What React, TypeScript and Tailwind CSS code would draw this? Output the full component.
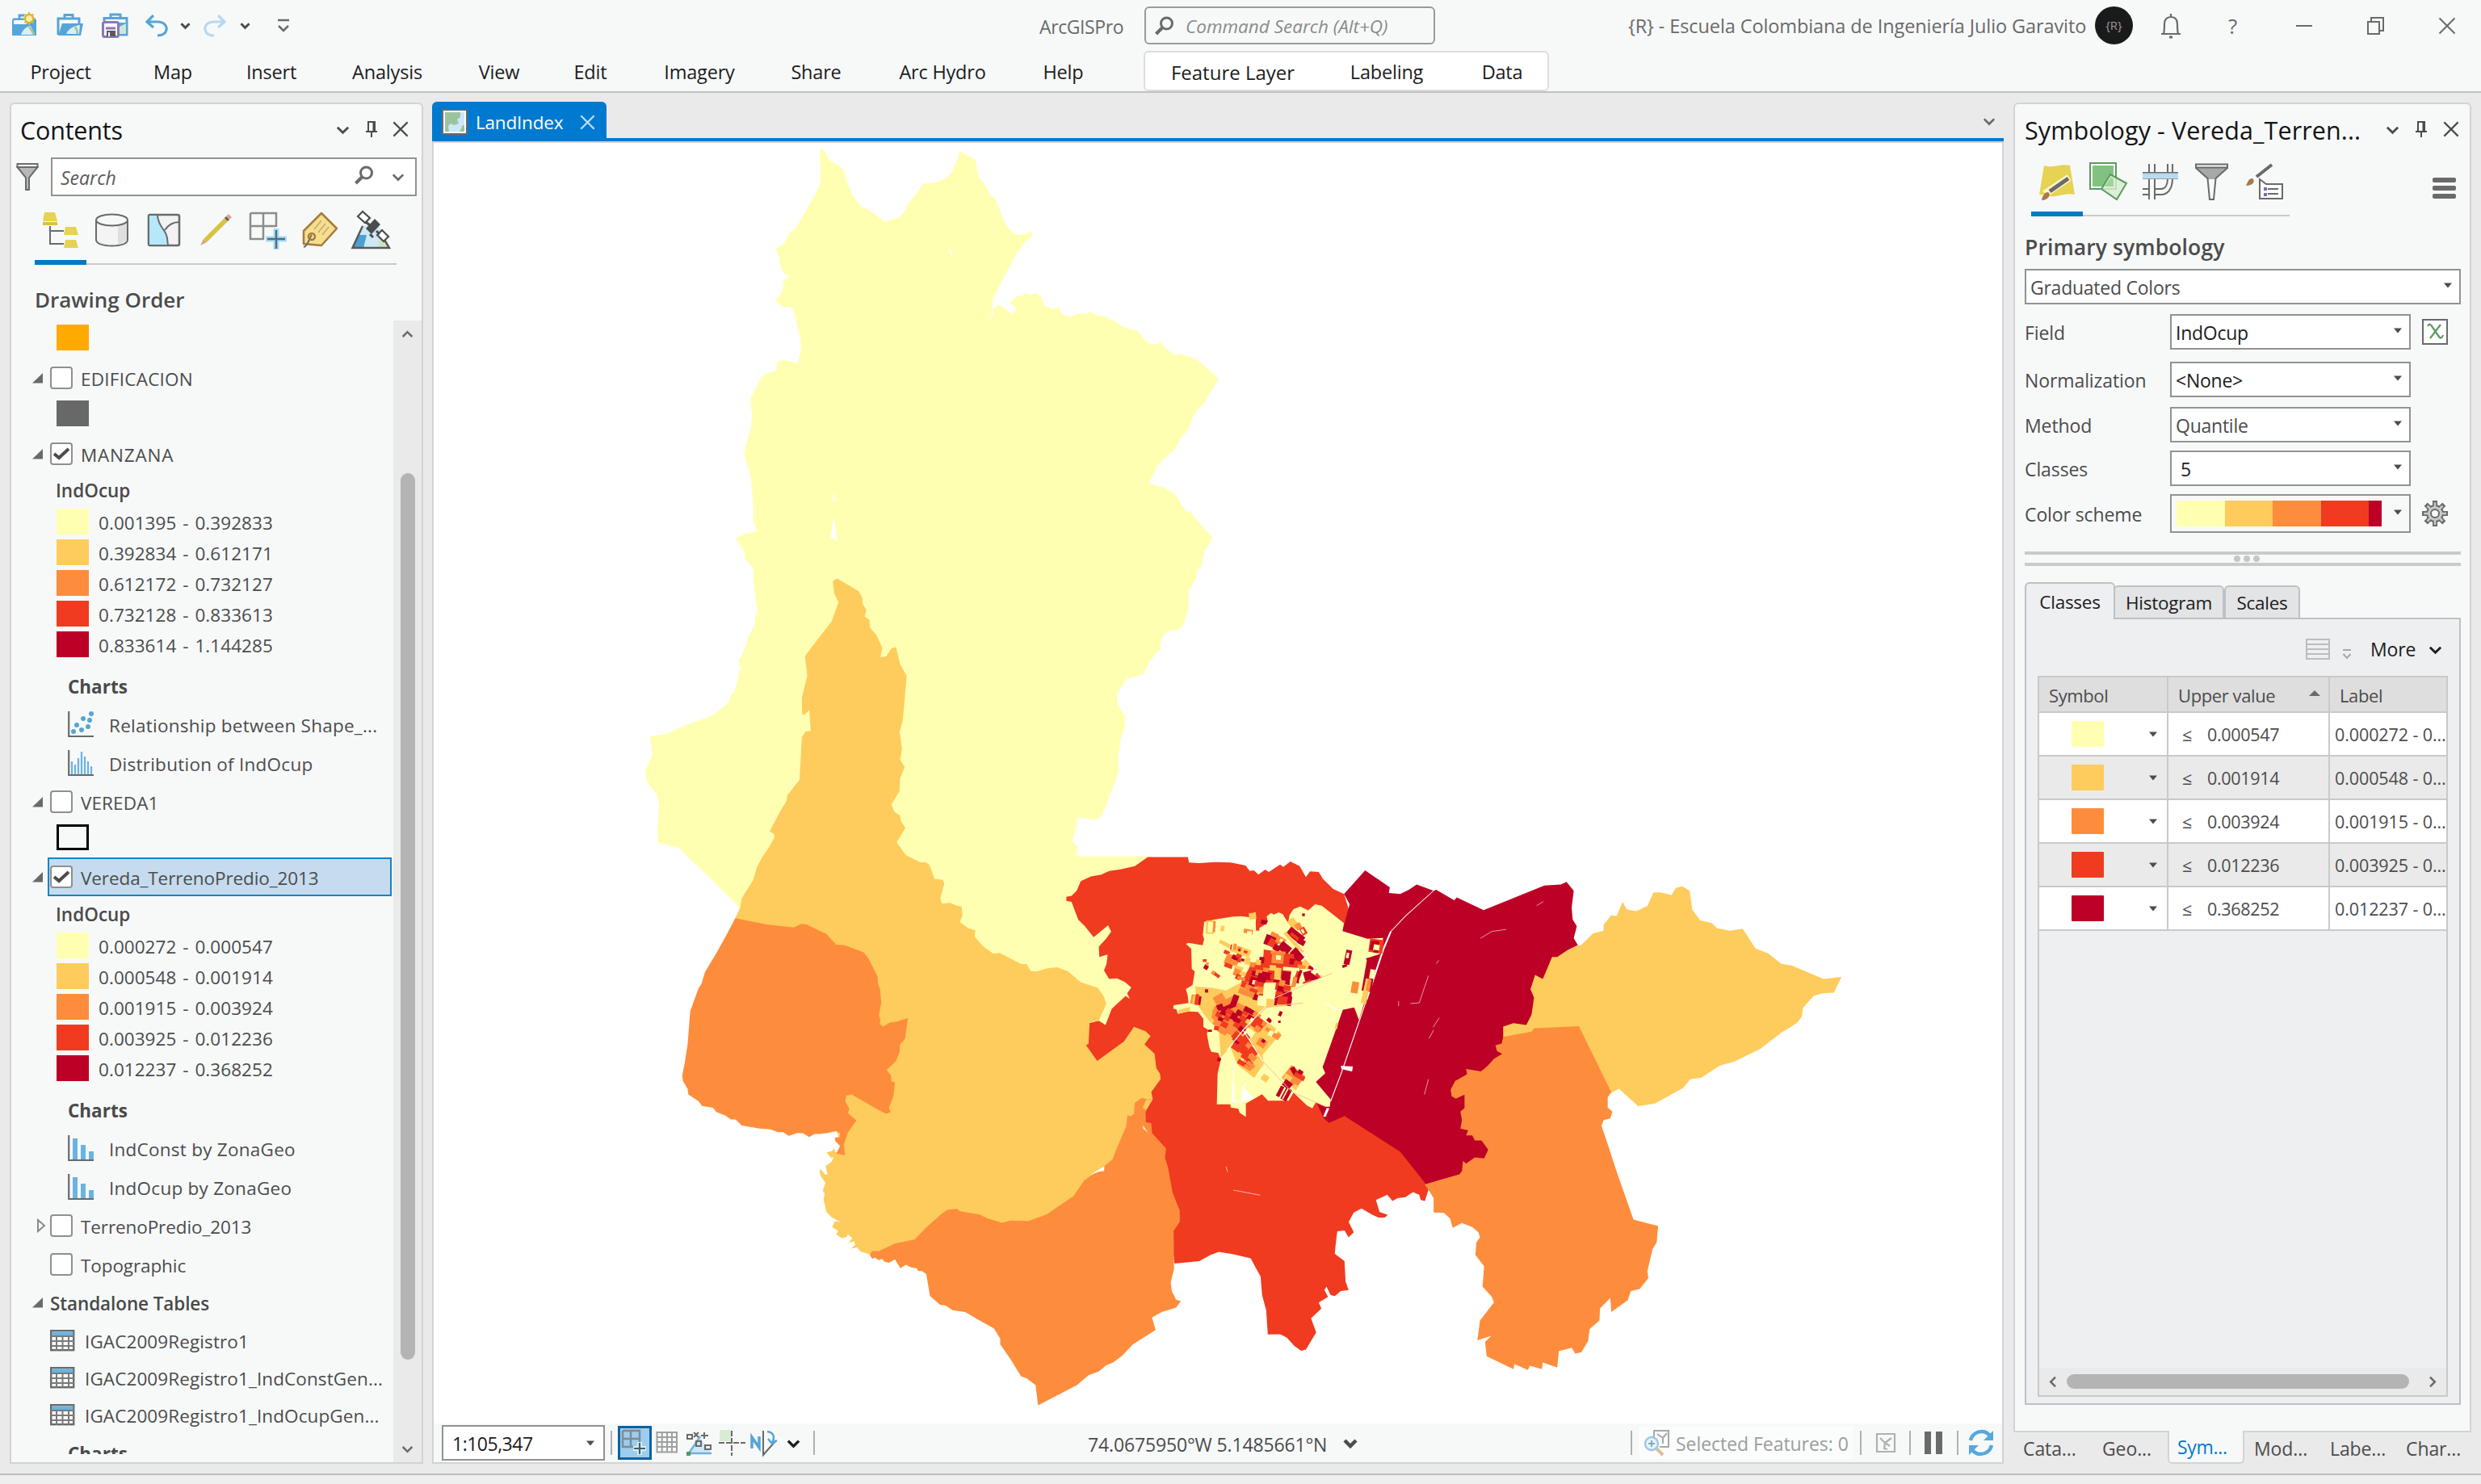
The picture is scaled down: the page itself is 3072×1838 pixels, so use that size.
import React from "react";

type P = { children?: React.ReactNode; className?: string };

const YELLOW = "#ffffb2";
const SAND = "#fecc5c";
const ORANGE = "#fd8d3c";
const RED = "#f03b20";
const DARK = "#bd0026";

/* ---------- small glyphs ---------- */

function Chevron({ className = "", dir = "down", size = 18, color = "#4c4c4c", w = 3 }: { className?: string; dir?: string; size?: number; color?: string; w?: number }) {
  const d = dir === "down" ? "M2 6 L9 13 L16 6" : dir === "up" ? "M2 12 L9 5 L16 12" : dir === "left" ? "M12 2 L5 9 L12 16" : "M6 2 L13 9 L6 16";
  return (
    <svg className={"shrink-0 " + className} width={size} height={size} viewBox="0 0 18 18" fill="none" stroke={color} strokeWidth={w}>
      <path d={d} />
    </svg>
  );
}

function Caret({ className = "" }: P) {
  return (
    <svg className={"shrink-0 " + className} width="10" height="7" viewBox="0 0 10 7">
      <path d="M0 0.5 H10 L5 6.5 Z" fill="#4c4c4c" />
    </svg>
  );
}

function Cross({ className = "", size = 22, color = "#4c4c4c", w = 2.4 }: { className?: string; size?: number; color?: string; w?: number }) {
  return (
    <svg className={"shrink-0 " + className} width={size} height={size} viewBox="0 0 22 22" fill="none" stroke={color} strokeWidth={w}>
      <path d="M1.5 1.5 L20.5 20.5 M20.5 1.5 L1.5 20.5" />
    </svg>
  );
}

function Pin({ className = "" }: P) {
  return (
    <svg className={"shrink-0 " + className} width="16" height="20" viewBox="0 0 16 20" fill="none" stroke="#4c4c4c" strokeWidth="2">
      <path d="M4 13 V1 H12 V13 M10.5 1 V13 M1 13 H15 M8 13 V20" />
    </svg>
  );
}

function Magnifier({ className = "" }: P) {
  return (
    <svg className={"shrink-0 " + className} width="24" height="24" viewBox="0 0 24 24" fill="none" stroke="#6a6a6a">
      <circle cx="14.500" cy="9" r="7" strokeWidth="3" />
      <path d="M9.500 14 L1.500 22" strokeWidth="4" />
    </svg>
  );
}

function Separator({ className = "" }: P) {
  return <div className={"h-[30px] w-[2px] shrink-0 bg-[#b0b0b0] " + className} />;
}

function Triangle() {
  return (
    <svg className="ml-[26px] shrink-0" width="14" height="13" viewBox="0 0 14 13">
      <path d="M0 12.500 L13 0 V12.500 Z" fill="#6a6a6a" />
    </svg>
  );
}

function Check({ on, className = "" }: { on?: boolean; className?: string }) {
  return (
    <div className={"flex size-7 shrink-0 items-center justify-center rounded-[4px] border-2 border-[#8f8f8f] bg-white " + className}>
      {on && (
        <svg width="20" height="16" viewBox="0 0 20 16" fill="none" stroke="#4c4c4c" strokeWidth="4">
          <path d="M1 8 L7 13 L19 2" />
        </svg>
      )}
    </div>
  );
}

/* ---------- title bar ---------- */

function Bag({ kind, className }: { kind: "new" | "open" | "save"; className: string }) {
  return (
    <svg className={"shrink-0 " + className} width="34" height="34" viewBox="0 0 34 34" fill="none">
      {kind === "new" && (
        <>
          <path d="M2 9 H18 M10 9 V4 H16" stroke="#56a5d9" strokeWidth="3" />
          <path d="M1 9 H31 V29 H1 Z" fill="#56a5d9" />
          <path d="M3 10 H22 V12 L18 15 H3 Z" fill="#f7f9f9" />
          <path d="M12 28 C14 22 18 18 24 17 L29 28 Z" fill="#dbeef5" />
          <path d="M22 18 C25 21 26 24 28 28" stroke="#9ecb9b" strokeWidth="3" />
          <circle cx="22" cy="8" r="5" fill="#fdf0a8" stroke="#d9b83a" strokeWidth="2.500" />
          <path d="M22 0 V3 M22 13 V16 M14 8 H17 M27 8 H30 M16.500 2.500 L18.500 4.500 M25.500 11.500 L27.500 13.500 M16.500 13.500 L18.500 11.500 M25.500 4.500 L27.500 2.500" stroke="#d9b83a" strokeWidth="2" />
        </>
      )}
      {kind === "open" && (
        <>
          <path d="M2 28 V8 H28 V14 M10 8 V3.500 H20 V8" stroke="#56a5d9" strokeWidth="3" />
          <path d="M7 14 H33 L30 29 H2 Z" fill="#56a5d9" />
          <path d="M12 27 C14 22 20 17 29 16 L28 27 Z" fill="#dbeef5" />
          <path d="M23 18 C25 21 26 24 26 27" stroke="#9ecb9b" strokeWidth="3" />
        </>
      )}
      {kind === "save" && (
        <>
          <path d="M3 11 V7.500 H31 V28 H22 M11 7 V3 H23 V7" stroke="#56a5d9" strokeWidth="3" />
          <path d="M22 13 H32 V29 H22 Z" fill="#56a5d9" />
          <path d="M22 27 V18 L30 14 V27 Z" fill="#cfe6d6" />
          <rect x="1.500" y="12.500" width="19" height="18" rx="2" fill="#f7f9f9" stroke="#8a78b8" strokeWidth="3" />
          <path d="M5 20 H17" stroke="#8a78b8" strokeWidth="3" />
          <path d="M6 23 H17 V30 H6 Z" fill="#5b5b5b" />
          <path d="M9 25 V30" stroke="#fff" strokeWidth="2" />
        </>
      )}
    </svg>
  );
}

function Undo({ flip, className }: { flip?: boolean; className: string }) {
  return (
    <svg className={"shrink-0 " + className} width="28" height="28" viewBox="0 0 28 28" fill="none" stroke={flip ? "#b7d8ee" : "#56a5d9"} strokeWidth="3.200">
      <path d={flip ? "M18 1 L26 9 L18 16 M25 9 H13 C4 9 1 15 2 19 C3 24 7 26 13 26" : "M10 1 L2 9 L10 16 M3 9 H15 C24 9 27 15 26 19 C25 24 21 26 15 26"} />
    </svg>
  );
}

function TitleBar() {
  return (
    <div className="flex h-[63px] items-center">
      <Bag kind="new" className="ml-[14px]" />
      <Bag kind="open" className="ml-[22px]" />
      <Bag kind="save" className="ml-[22px]" />
      <Undo className="ml-[20px]" />
      <Chevron size={13} className="ml-[15px]" w={4} />
      <Undo flip className="ml-[16px]" />
      <Chevron size={13} className="ml-[17px]" w={4} />
      <svg className="ml-[32px] shrink-0" width="18" height="18" viewBox="0 0 18 18" fill="none" stroke="#6a6a6a" strokeWidth="2.500">
        <path d="M2 2 H16 M3 9 L9 15 L15 9" />
      </svg>
      <span className="ml-[927px] w-[130px] pt-[3px] text-[23px] tracking-[-0.4px] text-[#6a6a6a]">ArcGISPro</span>
      <div className="flex h-[47px] w-[360px] shrink-0 items-center rounded-[6px] border-2 border-[#9a9a9a]">
        <Magnifier className="ml-[11px]" />
        <span className="ml-[14px] pt-[2px] text-[22.5px] tracking-[0px] text-[#8a8a8a] italic">Command Search (Alt+Q)</span>
      </div>
      <span className="ml-[239px] w-[578px] whitespace-nowrap pt-[2px] text-[23.5px] tracking-[-0.1px] text-[#6a6a6a]">{"{R} - Escuela Colombiana de Ingeniería Julio Garavito"}</span>
      <div className="flex size-[47px] shrink-0 items-center justify-center rounded-full bg-[#1a1a1a] text-[15px] text-[#9a9a9a]">{"{R}"}</div>
      <svg className="ml-[33px] shrink-0" width="28" height="32" viewBox="0 0 28 32" fill="none" stroke="#6a6a6a" strokeWidth="2.200">
        <path d="M2 26 H26 M5 26 C6 22 6 18 6 14 C6 8 9 5 14 5 C19 5 22 8 22 14 C22 18 22 22 23 26 M14 5 V1" />
        <path d="M12 30 H16" strokeWidth="3" />
      </svg>
      <span className="ml-[57px] w-[16px] pt-[2px] text-[26px] text-[#6a6a6a]">?</span>
      <div className="ml-[68px] h-[2px] w-[20px] bg-[#6a6a6a]" />
      <svg className="ml-[68px] shrink-0" width="22" height="22" viewBox="0 0 22 22" fill="none" stroke="#6a6a6a" strokeWidth="2">
        <path d="M1 6 H15 V21 H1 Z M5 6 V1 H20 V17 H15" />
      </svg>
      <Cross className="ml-[66px]" color="#6a6a6a" w={2} />
    </div>
  );
}

function Menu() {
  const t = "flex shrink-0 items-center justify-center pt-[4px] text-[23.5px] tracking-[-0.2px] text-[#1c1c1c]";
  return (
    <div className="flex h-[50px] items-center whitespace-nowrap">
      <div className={t + " w-[150px]"}>Project</div>
      <div className={t + " ml-[4px] w-[120px]"}>Map</div>
      <div className={t + " w-[124px]"}>Insert</div>
      <div className={t + " w-[163px]"}>Analysis</div>
      <div className={t + " w-[114px]"}>View</div>
      <div className={t + " w-[112px]"}>Edit</div>
      <div className={t + " w-[158px]"}>Imagery</div>
      <div className={t + " w-[131px]"}>Share</div>
      <div className={t + " w-[182px]"}>Arc Hydro</div>
      <div className={t + " w-[117px]"}>Help</div>
      <div className="ml-[41px] flex h-[50px] w-[502px] items-center rounded-[6px] border-2 border-[#dedede] bg-white">
        <div className="flex w-[217px] shrink-0 items-center justify-center pt-[4px] text-[24px] tracking-[0px] text-[#1c1c1c]">Feature Layer</div>
        <div className={t + " w-[164px]"}>Labeling</div>
        <div className={t + " w-[122px]"}>Data</div>
      </div>
    </div>
  );
}

/* ---------- contents pane ---------- */

function ContentsTabs() {
  return (
    <div className="ml-[29px] flex h-[64px] w-[448px]">
      <svg width="448" height="52" viewBox="43 259 448 52" fill="none" className="shrink-0">
        <path d="M55 263 H68 L71 274 H53 Z M81 281 H94 L97 291 H79 Z M81 297 H94 L97 307 H79 Z" fill="#e6d253" />
        <path d="M53 275 H71 V279 H53 Z" fill="#d9c23e" />
        <path d="M62 280 V302 H79 M62 286 H79" stroke="#6a6a6a" strokeWidth="2" />
        <path d="M119 273 V297 C119 302 128 304.500 138.500 304.500 C149 304.500 158 302 158 297 V273" fill="#f4f4f4" stroke="#6a6a6a" strokeWidth="2" />
        <path d="M146 280 L157 276 V298 L146 303 Z" fill="#dedede" />
        <ellipse cx="138.500" cy="272.500" rx="19.500" ry="7" fill="#f7f7f7" stroke="#6a6a6a" strokeWidth="2" />
        <rect x="184" y="266" width="38" height="38" rx="2" fill="#f2f2f2" stroke="#6a6a6a" strokeWidth="2.500" />
        <path d="M185 267 H195 C196 280 204 284 206 291 C208 297 207 300 208 303 H185 Z" fill="#b5e8fa" />
        <path d="M195 267 C196 280 204 284 206 291 C208 297 207 300 208 303 M204 285 C208 279 214 275 222 275" stroke="#6a6a6a" strokeWidth="2" />
        <path d="M252 296 L278 270 L282 274 L256 300 Z" fill="#d9c23e" />
        <path d="M278 270 L280 268 L284 272 L282 274 Z" fill="#5a5a5a" />
        <path d="M280 268 L283 265 L287 269 L284 272 Z" fill="#e9a18f" />
        <path d="M252 296 L248 304 L256 300 Z" fill="#d9a877" />
        <path d="M310 264 H342 V281 M326 264 V296 M310 264 V296 H327 M310 280 H342" stroke="#8c8c8c" strokeWidth="2.500" />
        <path d="M342 283 V309 M329 296 H355" stroke="#a8dcf8" strokeWidth="7" />
        <path d="M342 285 V308 M331 296 H353" stroke="#4f6f80" strokeWidth="2.500" />
        <path d="M398 264 L417 283 L398 304 L376 302 V286 Z" fill="#f3df8f" stroke="#a97a3c" strokeWidth="2.500" strokeLinejoin="round" />
        <path d="M389 284 L398 273 M394 288 L403 277 M399 291 L407 281" stroke="#c9a86a" strokeWidth="1.500" />
        <path d="M386 291 C382 296 382 304 376 306" stroke="#6a6a6a" strokeWidth="2" />
        <circle cx="386" cy="293" r="4" stroke="#a97a3c" strokeWidth="2.500" />
        <path d="M449 279 L436 307 H482 L469 279 Z" fill="#cfe8f6" />
        <path d="M444 291 H454 L450 307 H437 Z" fill="#4c9fd4" />
        <path d="M470 285 L480 307 H468 Z" fill="#cbe4c8" />
        <path d="M449 280 L436.500 307 H482 L476 297" stroke="#5a5a5a" strokeWidth="2.500" />
        <path d="M443 268 L449 262 L458 270 L452 276 Z M467 291 L473 285 L481 293 L475 299 Z" fill="#fff" stroke="#4c4c4c" strokeWidth="2.200" />
        <path d="M453 283 L464 271 L471 278 L460 290 Z" fill="#4c4c4c" />
        <path d="M453 275 L458 279 M466 286 L470 290 M458 290 L462 294" stroke="#4c4c4c" strokeWidth="3" />
      </svg>
    </div>
  );
}

const layerText = "whitespace-nowrap pt-[3px] text-[22.5px]";

function LayerRow({ name, on, selected, arrow = "open", className = "", track = "tracking-[-0.1px]" }: { name: string; on?: boolean; selected?: boolean; arrow?: string; className?: string; track?: string }) {
  return (
    <div className={"flex h-12 items-center " + className}>
      {arrow === "open" && <Triangle />}
      {arrow === "closed" && (
        <svg className="mr-[-3px] ml-[32px] shrink-0" width="11" height="18" viewBox="0 0 11 18" fill="none" stroke="#8a8a8a" strokeWidth="2">
          <path d="M1 2 V16 L9 9 Z" />
        </svg>
      )}
      {arrow === "none" && <div className="ml-[26px] w-[14px]" />}
      <div className={selected ? "ml-[5px] flex h-[48px] w-[426px] items-center border-2 border-[#1583c7] bg-[#c6dcee]" : "ml-[5px] flex h-[48px] w-[426px] items-center border-2 border-transparent"}>
        <Check on={on} className="ml-[1px]" />
        <span className={layerText + " ml-[10px] " + track}>{name}</span>
      </div>
    </div>
  );
}

function Swatch({ color, label }: { color: string; label?: string }) {
  return (
    <div className="flex h-[38px] items-center">
      <svg className="ml-[56px] shrink-0" width="40" height="32">
        <rect width="40" height="32" fill={color} />
      </svg>
      {label && <span className="ml-[12px] whitespace-nowrap pt-[3px] text-[22.5px] tracking-[0.05px] [word-spacing:2px]">{label}</span>}
    </div>
  );
}

function Bold({ children, className = "" }: P) {
  return <div className={"flex items-center whitespace-nowrap pt-[3px] text-[22.5px] text-[#4a4a4a] " + className}>{children}</div>;
}

function ChartRow({ kind, name }: { kind: "scatter" | "hist" | "bar"; name: string }) {
  return (
    <div className="flex h-12 items-center">
      <svg className="ml-[70px] shrink-0" width="33" height="34" viewBox="0 0 33 34" fill="none">
        <path d="M1.200 1 V32 H32" stroke="#6a6a6a" strokeWidth="2.200" />
        {kind === "scatter" && (
          <g fill="#56a5d9">
            <circle cx="29" cy="4" r="3" />
            <circle cx="19" cy="10" r="3" />
            <circle cx="27" cy="12" r="3" />
            <circle cx="11" cy="18" r="3" />
            <circle cx="25" cy="20" r="3" />
            <circle cx="17" cy="24" r="3" />
            <circle cx="7" cy="26" r="3" />
          </g>
        )}
        {kind === "hist" && <path d="M5 31 V15 M9 31 V19 M13 31 V11 M17 31 V3 M21 31 V9 M25 31 V15 M29 31 V21" stroke="#6bb3e0" strokeWidth="2.200" />}
        {kind === "bar" && <path d="M9 31 V5 M19 31 V13 M29 31 V21" stroke="#6bb3e0" strokeWidth="6" />}
      </svg>
      <span className={layerText + " ml-[18px] tracking-[0.25px]"}>{name}</span>
    </div>
  );
}

function TableRow({ name }: { name: string }) {
  return (
    <div className="flex h-[46px] items-center">
      <svg className="ml-[48px] shrink-0" width="31" height="27" viewBox="0 0 31 27" fill="none">
        <rect x="1.200" y="1.200" width="28" height="24" fill="#fff" stroke="#6a6a6a" strokeWidth="2.400" />
        <path d="M2 2.500 H28.500 V7 H2 Z" fill="#6bb3e0" />
        <path d="M1 8 H30 M1 14 H30 M1 20 H30 M8 8 V26 M15.500 8 V26 M23 8 V26" stroke="#7a7a7a" strokeWidth="2" />
      </svg>
      <span className={layerText + " ml-[12px] tracking-[0.1px]"}>{name}</span>
    </div>
  );
}

function Contents() {
  return (
    <section className="ml-[12px] flex h-[1686px] w-[512px] shrink-0 flex-col rounded-t-[6px] border-2 border-[#d2d3d8] bg-[#f7f9f9] text-[#4c4c4c]">
      <div className="flex h-[66px] items-center">
        <h1 className="ml-[11px] w-[391px] text-[30.5px] tracking-[-0.2px] text-[#141414]">Contents</h1>
        <Chevron size={17} className="-mt-1" />
        <Pin className="mt-[-4px] ml-[19px]" />
        <Cross className="mt-[-4px] ml-[18px]" size={20} />
      </div>
      <div className="flex h-[48px] items-center">
        <svg className="ml-[6px] shrink-0" width="28" height="34" viewBox="0 0 28 34" fill="none" stroke="#6a6a6a" strokeWidth="2">
          <path d="M1.500 5 H26.500 L16 18 V33 H12 V18 Z" fill="#b8b8b8" />
          <path d="M1.500 1 H26.500 V5 H1.500 Z" fill="#fff" />
        </svg>
        <div className="ml-[15px] flex h-[48px] w-[453px] items-center border-2 border-[#929292] bg-white">
          <span className="ml-[10px] w-[364px] pt-[2px] text-[23px] text-[#5a5a5a] italic">Search</span>
          <Magnifier className="-mt-1" />
          <Chevron size={16} className="ml-[22px]" color="#6a6a6a" />
        </div>
      </div>
      <div className="h-[16px]" />
      <ContentsTabs />
      <div className="ml-[29px] flex h-[5px] w-[448px] items-end border-b-2 border-[#cacaca]">
        <div className="-mb-[2px] h-[6px] w-[64px] bg-[#007ac2]" />
      </div>
      <h2 className="mt-[21px] mb-[4px] ml-[29px] flex h-[44px] items-center text-[26px] font-semibold tracking-[0px]">Drawing Order</h2>
      <div className="flex h-[1414px] overflow-hidden">
        <div className="h-[1404px] w-[473px] overflow-hidden pt-[2px]">
          <Swatch color="#ffaa00" />
          <LayerRow name="EDIFICACION" track="tracking-[0.25px]" className="mt-[7px] mb-px" />
          <Swatch color="#686868" />
          <LayerRow name="MANZANA" on track="tracking-[0.8px]" className="mt-[7px]" />
          <Bold className="mb-px ml-[55px] h-10 font-semibold">IndOcup</Bold>
          <Swatch color={YELLOW} label="0.001395 - 0.392833" />
          <Swatch color={SAND} label="0.392834 - 0.612171" />
          <Swatch color={ORANGE} label="0.612172 - 0.732127" />
          <Swatch color={RED} label="0.732128 - 0.833613" />
          <Swatch color={DARK} label="0.833614 - 1.144285" />
          <Bold className="mt-[8px] ml-[70px] h-12 font-bold">Charts</Bold>
          <ChartRow kind="scatter" name="Relationship between Shape_..." />
          <ChartRow kind="hist" name="Distribution of IndOcup" />
          <LayerRow name="VEREDA1" className="mb-px" track="tracking-[0.1px]" />
          <div className="flex h-[38px] items-center">
            <div className="ml-[56px] h-8 w-10 border-[3px] border-black" />
          </div>
          <LayerRow name="Vereda_TerrenoPredio_2013" on selected className="mt-[6px] mb-px" />
          <Bold className="mb-px ml-[55px] h-10 font-semibold">IndOcup</Bold>
          <Swatch color={YELLOW} label="0.000272 - 0.000547" />
          <Swatch color={SAND} label="0.000548 - 0.001914" />
          <Swatch color={ORANGE} label="0.001915 - 0.003924" />
          <Swatch color={RED} label="0.003925 - 0.012236" />
          <Swatch color={DARK} label="0.012237 - 0.368252" />
          <Bold className="mt-[8px] ml-[70px] h-12 font-bold">Charts</Bold>
          <ChartRow kind="bar" name="IndConst by ZonaGeo" />
          <ChartRow kind="bar" name="IndOcup by ZonaGeo" />
          <LayerRow name="TerrenoPredio_2013" arrow="closed" />
          <LayerRow name="Topographic" arrow="none" />
          <div className="-mt-px flex h-12 items-center">
            <Triangle />
            <Bold className="ml-[8px] font-semibold tracking-[-0.1px]">Standalone Tables</Bold>
          </div>
          <TableRow name="IGAC2009Registro1" />
          <TableRow name="IGAC2009Registro1_IndConstGen..." />
          <TableRow name="IGAC2009Registro1_IndOcupGen..." />
          <Bold className="ml-[70px] h-12 font-bold">Charts</Bold>
        </div>
        <div className="flex h-[1414px] w-[35px] flex-col items-center bg-[#eaeaea]">
          <Chevron dir="up" size={15} className="mt-[10px]" color="#6a6a6a" />
          <div className="mt-[164px] h-[1098px] w-[18px] rounded-full bg-[#b4b4b4]" />
          <Chevron size={15} className="mt-[103px]" color="#6a6a6a" />
        </div>
      </div>
    </section>
  );
}

/* ---------- map ---------- */

/* [x, y, width, height, rotation, colour] for the urban blocks */
type Block = [number, number, number, number, number, string];
const Y = YELLOW, S = SAND, O = ORANGE, R = RED, D = DARK;
const blocks: Block[] = [
  [320, 92, 26, 24, -5, S], [346, 120, 28, 18, -35, R], [364, 118, 22, 16, 10, D], [346, 136, 12, 22, 0, R], [160, 120, 30, 50, 4, S], [167, 126, 18, 38, 4, Y],
  [186, 122, 9, 42, 4, O], [214, 140, 14, 20, 10, S], [300, 153, 34, 16, 10, O], [312, 160, 18, 12, 0, Y], [470, 112, 28, 40, -40, S], [492, 130, 22, 24, -30, O], [512, 146, 20, 28, -30, R], [515, 152, 9, 16, -30, Y], [517, 94, 10, 10, 0, D],
  [378, 176, 40, 38, 20, D], [392, 190, 34, 30, 30, R], [400, 166, 30, 16, 25, O], [420, 182, 34, 26, 30, O], [434, 188, 12, 12, 30, Y], [410, 212, 26, 22, 30, D], [430, 206, 44, 34, 40, D], [460, 160, 66, 32, 38, D], [470, 176, 44, 12, 38, R], [500, 190, 28, 20, 30, D], [436, 196, 100, 13, 48, S], [474, 232, 50, 32, 45, D],
  [516, 270, 34, 26, 40, S], [374, 232, 32, 34, 8, R], [400, 234, 56, 12, 5, O], [404, 246, 44, 34, 5, O], [420, 250, 18, 16, 5, Y], [452, 244, 34, 22, 5, R], [450, 268, 36, 22, 5, R], [470, 262, 22, 22, 5, D], [486, 272, 30, 20, 10, R], [500, 286, 30, 14, 10, O],
  [358, 256, 18, 22, 5, D], [344, 266, 20, 20, 8, S], [322, 276, 24, 18, 10, O], [340, 288, 34, 20, 5, R], [376, 270, 24, 24, 5, R], [318, 296, 24, 26, 10, R], [330, 308, 20, 18, 10, D], [344, 304, 28, 22, 10, O], [372, 296, 24, 18, 5, O], [396, 286, 24, 22, 5, S], [390, 306, 26, 14, 5, R],
  [350, 318, 34, 36, 18, D], [366, 312, 38, 28, 10, D], [398, 322, 34, 18, 8, R], [410, 340, 30, 12, 8, D], [414, 296, 24, 44, 5, S], [440, 310, 34, 48, 8, D], [446, 294, 60, 14, 5, Y], [474, 306, 22, 50, 8, Y], [490, 308, 14, 44, 20, R], [500, 304, 12, 50, 18, D], [480, 330, 16, 40, 12, O], [512, 300, 12, 50, 20, Y], [524, 306, 52, 38, -15, D], [552, 300, 22, 20, 35, Y], [566, 320, 24, 12, 30, R], [520, 344, 32, 12, -20, R], [540, 290, 20, 12, 20, D],
  [290, 352, 40, 22, 25, R], [320, 330, 24, 42, 20, D], [332, 342, 14, 16, 10, Y], [304, 362, 40, 18, 25, O], [340, 348, 34, 20, 10, R], [346, 366, 28, 22, 10, O], [320, 374, 30, 24, 20, R], [334, 394, 18, 22, 15, D], [356, 392, 18, 14, 0, R],
  [372, 354, 46, 80, 6, Y], [352, 400, 34, 38, 6, Y], [418, 350, 26, 30, 10, R], [432, 342, 22, 22, 10, O], [424, 364, 26, 28, 10, D], [448, 362, 26, 20, 8, R], [418, 384, 34, 20, 5, R], [444, 384, 34, 26, 5, D], [426, 402, 42, 32, 5, R], [414, 400, 12, 36, 10, D], [462, 402, 16, 36, 10, D], [384, 412, 30, 24, 10, S],
  [226, 232, 22, 14, 25, R], [236, 246, 26, 18, 25, O], [228, 262, 30, 22, 20, O], [228, 280, 30, 16, 20, R], [256, 250, 28, 18, 25, D], [272, 244, 20, 16, 20, R], [256, 268, 22, 20, 20, O], [264, 290, 34, 12, 20, S], [290, 262, 12, 10, 10, D], [276, 262, 14, 14, 10, R], [262, 300, 26, 26, 20, O], [270, 320, 18, 20, 25, R], [286, 310, 22, 16, 20, S], [276, 330, 30, 12, 20, O], [304, 258, 20, 26, 5, S], [262, 257, 9, 10, 0, D],
  [206, 206, 70, 14, 28, S], [250, 218, 76, 28, 20, S], [248, 208, 12, 20, 10, Y], [262, 206, 10, 24, 10, O], [276, 218, 16, 14, 20, O], [280, 226, 8, 9, 0, D], [250, 210, 6, 18, 10, R], [300, 232, 14, 10, 20, R],
  [148, 264, 14, 10, 0, R], [152, 286, 16, 16, 30, D], [160, 276, 10, 10, 0, O], [180, 308, 16, 14, 30, O], [190, 318, 22, 12, 35, R], [156, 376, 12, 12, 0, D],
  [104, 396, 18, 34, 10, O], [120, 394, 12, 40, 8, R], [110, 400, 8, 28, 8, S], [132, 402, 9, 32, 8, D],
  [190, 396, 40, 34, -30, O], [220, 410, 46, 26, -25, O], [280, 378, 60, 22, 20, O], [270, 400, 60, 34, 25, S], [256, 396, 22, 40, 20, D], [200, 432, 24, 22, -20, D], [222, 436, 34, 16, -20, D], [246, 428, 24, 16, -20, D], [184, 452, 22, 22, 0, O], [196, 460, 24, 20, 20, R], [214, 452, 22, 20, 25, D], [234, 450, 26, 20, 30, R], [204, 480, 20, 14, 20, D], [228, 472, 24, 22, 30, R], [252, 464, 24, 26, 30, D], [272, 454, 24, 20, 30, D], [294, 456, 22, 16, 30, R], [300, 446, 40, 18, 30, D], [284, 474, 26, 22, 35, R], [312, 472, 24, 20, 35, D], [334, 462, 30, 16, 40, O], [322, 484, 20, 18, 35, Y], [262, 482, 26, 20, 35, D], [240, 492, 26, 22, 35, O], [214, 496, 26, 24, 30, R], [188, 490, 26, 22, 30, O], [206, 518, 34, 24, 30, O], [234, 514, 30, 28, 35, O], [262, 502, 28, 18, 35, R], [286, 496, 24, 18, 35, R], [280, 516, 26, 20, 40, D], [190, 512, 18, 16, 10, R], [168, 526, 14, 8, 0, D], [308, 490, 24, 16, 35, S], [252, 538, 30, 12, -45, R],
  [330, 490, 44, 34, 35, R], [342, 482, 30, 18, 35, R], [368, 496, 16, 18, 35, O], [340, 512, 22, 22, 35, O], [304, 524, 34, 30, 35, Y], [386, 484, 18, 14, 40, D], [430, 458, 12, 18, 25, D], [428, 492, 9, 9, 0, D], [404, 484, 20, 14, 35, Y], [380, 520, 24, 14, 30, O], [392, 530, 18, 20, 30, Y], [408, 536, 28, 24, 35, O], [416, 526, 10, 14, 30, Y], [350, 560, 34, 30, 35, O], [366, 562, 14, 12, 35, D],
  [262, 546, 44, 34, 40, R], [262, 566, 20, 16, 40, D], [256, 580, 34, 24, 35, R], [288, 560, 42, 34, 50, R], [300, 544, 22, 18, 50, R], [280, 594, 44, 26, 40, R], [308, 576, 20, 18, 40, O], [316, 596, 36, 24, 45, R], [290, 618, 40, 22, 40, R], [284, 634, 20, 16, 30, O], [288, 634, 12, 12, 10, Y], [318, 618, 30, 24, 45, O], [276, 642, 36, 18, 30, R], [308, 642, 24, 20, 40, D], [308, 648, 34, 16, 40, O], [336, 640, 34, 24, 45, S], [300, 660, 30, 14, 35, O], [324, 678, 22, 22, 35, S], [202, 630, 13, 13, 20, D],
  [366, 694, 26, 24, 35, S], [452, 672, 66, 60, 38, O], [448, 694, 30, 22, 35, S], [478, 664, 18, 32, -30, D], [500, 676, 20, 16, 35, D], [486, 692, 42, 16, 30, R], [446, 716, 32, 26, 38, D], [428, 734, 14, 42, 28, D], [446, 742, 24, 48, 28, D], [452, 742, 5, 44, 28, Y], [482, 730, 18, 18, 35, S],
  [766, 190, 52, 50, 8, R], [770, 196, 14, 34, 10, D], [782, 210, 22, 22, 10, Y], [784, 196, 20, 12, 10, D], [782, 230, 18, 10, 10, D], [676, 230, 22, 54, 12, D], [681, 240, 10, 20, 12, Y], [666, 284, 18, 10, -20, D],
  [700, 348, 26, 42, 10, O], [748, 262, 36, 122, 10, D], [768, 302, 18, 34, 10, Y], [744, 336, 20, 94, 12, S], [757, 338, 14, 44, 10, O], [640, 500, 9, 24, 10, S],
];

function MapDrawing() {
  return (
    <svg className="block" width="1942" height="1586" viewBox="537 177 1942 1586">
      <g transform="translate(780 170) scale(.48469 .57398)">
        <path fill={YELLOW} d="M485 30L490 24L500 34L510 50L528 58L545 70L558 105L572 130L592 150L620 162L652 183L690 172L705 155L708 146L735 118L748 100L780 98L808 88L820 78L838 45L842 30L882 48L892 88L905 100L920 125L936 136L955 180L972 202L995 212L1028 203L1025 215L1010 225L985 255L960 295L928 348L922 390L928 384L927 370L940 362L955 367L975 382L988 370L969 357L990 342L1000 343L1010 336L1022 340L1035 336L1050 343L1058 362L1080 372L1095 366L1104 382L1122 387L1150 380L1168 382L1174 376L1190 384L1210 386L1245 400L1260 410L1295 417L1325 445L1347 447L1355 441L1370 456L1393 471L1405 467L1450 480L1503 521L1467 574L1445 592L1425 632L1408 648L1390 675L1352 703L1328 742L1328 748L1365 756L1392 770L1408 792L1422 808L1430 807L1488 865L1468 892L1458 930L1450 932L1448 948L1428 978L1426 1020L1415 1050L1402 1063L1375 1065L1358 1080L1355 1105L1332 1125L1310 1160L1270 1168L1245 1200L1245 1222L1266 1250L1264 1272L1253 1300L1248 1340L1248 1370L1215 1445L1205 1465L1192 1472L1144 1468L1136 1500L1130 1520L1144 1530L1140 1552H1320V1568H165L125 1533L72 1520L70 1490L75 1440L68 1418L45 1393L38 1370L56 1335L56 1318L50 1293L95 1287L145 1268L210 1248L250 1222L258 1203L267 1197L278 1160L277 1155L284 1148L278 1130L298 1095L300 1080L318 1055L320 1035L326 1023L316 965L315 930L293 908V895L270 865L295 855L325 851L315 828V790L308 730L291 682L308 630L312 600L307 565L338 514L375 502V485L390 481L430 487L437 455L435 433L425 400L418 372L408 366L390 367L371 350L385 340L392 325L390 310L406 301L390 290L383 275L381 258L373 241L395 228L408 205L422 198L445 165L475 120L488 95Z" />
        <path fill="#fff" d="M520 766L523 788L516 784ZM517 828L523 827L529 871L511 862L516 848ZM816 240H819L826 262L815 247Z" />
      </g>
      <g transform="translate(780 1040) scale(.44643 .45281)">
        <path fill={YELLOW} d="M77 0V8L137 22L305 187L420 0ZM640 -5H1228L1226 8L1243 18L1238 46H1440V520H1250L640 120Z" />
      </g>
      <g transform="translate(1300 1040) scale(.63776 .42092)">
        <path fill={RED} d="M190 51H268L270 67L290 69L320 66L350 67L380 76L388 92L396 90L405 103L418 88L425 95L447 73L453 80L467 64L485 78L497 110L505 93L522 95L530 115L550 145L571 160L600 300L560 700L600 780L720 915L735 1030L728 1063L720 1060L717 1045L705 1037L690 1052L675 1055L665 1063L655 1045L633 1060L640 1095L656 1104L650 1112L638 1112L625 1103L605 1085L590 1097L580 1125L590 1155L580 1170L572 1150L558 1152L556 1175L553 1218L572 1240L574 1300L580 1325L565 1328L553 1343L545 1340L537 1315L533 1325L540 1345L522 1362L527 1380L507 1408L517 1450L497 1500L488 1504L475 1490L460 1465L447 1455L423 1456L420 1385L412 1340L409 1285L398 1255L390 1232L350 1218L328 1213L312 1222L290 1240L242 1247L230 1100L150 900L60 700L60 600L70 603L76 540L95 533L108 545L120 498L147 460L155 468L150 452L158 435L145 418L130 408L115 410L105 385L110 365L112 338L96 345L95 315L110 290L119 270L113 252L85 287L68 255L55 235L42 183L32 180V168L42 165L52 150L60 122L80 108L100 103L115 92L135 88L165 78Z" />
      </g>
      <g transform="translate(780 170) scale(.48469 .57398)">
        <path fill={SAND} d="M518 958L530 952L585 980L594 995V1006L604 1020L600 1034L612 1042L613 1058L630 1075L645 1102L640 1122L655 1120L668 1103L680 1100L690 1137L707 1162L697 1258L689 1283L695 1320L690 1343L702 1360L690 1383L689 1410L668 1440L675 1455L690 1464L693 1477L704 1490L681 1522L700 1548L735 1562L735 1568H329L345 1550L369 1515L368 1503L357 1498L380 1460L400 1432L402 1420L433 1387L437 1330L439 1295L449 1282L462 1281L458 1236L445 1247L440 1245L439 1210L453 1162L447 1120L480 1083L515 1045L533 1003L522 985Z" />
      </g>
      <g transform="translate(780 1040) scale(.44643 .45281)">
        <path fill={SAND} d="M400 -5L385 22L368 45L352 75L342 110L310 160L305 187L292 215L500 500L560 760L597 864L570 855L567 845L560 852L545 855L558 870L565 868L560 880L543 893L548 917L540 915L530 902L525 906L530 922L542 938L535 960L540 968L537 985L545 1018L560 1033L585 1047L568 1043L561 1060L578 1070L572 1080L588 1090L600 1087L605 1080L617 1090L606 1103L622 1098L625 1108L613 1118L630 1115L640 1127L665 1134L900 1100L1300 1000L1420 760L1450 710L1446 690L1472 655L1470 640L1460 625L1455 585L1427 560L1444 537L1430 524L1398 512L1370 552L1296 605L1265 562L1272 558L1275 500L1300 495L1321 450L1315 430L1298 405L1250 390L1215 360L1185 349L1155 352L1130 360L1112 360L1100 340L1085 340L1025 310L1008 312L980 292L956 265L958 248L938 242L915 225L922 208L920 183L905 180L888 173L865 175L861 160L872 120L868 110L845 107L830 68L820 62L805 62L765 42L740 8V-5Z" />
        <path fill={ORANGE} d="M292 215L380 232L455 240L475 230L490 232L545 258L572 287L595 288L648 308L662 325L687 375L688 395L694 410L697 445L691 480L695 495L693 503L702 512L720 500L738 498L771 488L763 545L749 560L748 580L738 605L712 630L724 645L725 660L735 665L731 700L718 735L724 745L711 750L690 740L615 697L600 700L597 715L608 735L605 748L628 768L605 800L593 835L597 864L572 858L583 838L570 825L568 815L582 813L583 803L572 797L545 803L525 805L512 805L497 813L480 803L465 802L440 810L425 800L410 800L390 792L360 790L310 782L293 765L280 765L265 755L240 745L230 733L200 728L190 715L162 697L160 682L147 660L145 645L152 610L160 560L167 470L190 407L198 395L208 362L240 310L268 260Z" />
        <path fill={ORANGE} d="M1450 708L1440 712L1420 706L1400 720L1398 750L1388 757L1380 753L1376 785L1350 845L1338 875L1313 895L1260 932L1230 975L1155 1025L1105 1043L1055 1042L1032 1048L990 1035L970 1025L915 1016L908 1010L880 1012L862 1025L820 1062L790 1093L735 1105L690 1125H672L665 1135L672 1147L680 1143L690 1150L700 1146L705 1154L718 1157L735 1148L750 1172L765 1163L780 1170L795 1172L800 1180L810 1180L822 1188L832 1248L860 1272L875 1274L895 1287L930 1292L970 1315L1010 1337L1027 1365V1380L1055 1420L1085 1468L1100 1473L1125 1492L1132 1547L1240 1492L1272 1465L1300 1455L1320 1438L1340 1430L1365 1412L1395 1380L1458 1341L1448 1307L1475 1292L1515 1280L1528 1262L1515 1258L1503 1235L1500 1210L1509 1175L1508 1070L1525 1045V1015L1505 965L1492 895L1484 870L1487 845L1448 802L1446 775L1431 773L1430 738L1422 733L1432 712Z" />
        <path fill="#fff" d="M1422 780L1437 802L1424 790ZM1275 918L1316 893L1315 906L1300 908Z" />
      </g>
      <g transform="translate(1300 1040) scale(.63776 .42092)">
        <path fill={SAND} d="M1025 310L1030 312L1055 275L1065 272L1075 268V250L1090 222L1100 225L1112 183L1120 205L1138 210L1160 195L1172 155L1185 155L1207 163L1215 142L1228 137L1242 150L1247 205L1262 237L1285 245L1295 260L1320 268L1345 262L1370 320L1395 335L1420 365L1440 370L1502 410L1537 404L1522 450L1500 452L1483 460L1462 495L1460 520L1450 540L1420 568L1380 615L1330 652L1300 665L1265 700L1243 705L1230 730L1175 776L1142 784L1105 733L1090 745L1000 700L860 600L900 400Z" />
        <path fill={ORANGE} d="M880 580L935 565L940 555L1027 549L1090 743L1083 758V788L1092 800L1088 820L1075 825L1071 842L1085 905L1100 975L1133 1118L1181 1137L1178 1185L1170 1205L1160 1270L1162 1290L1145 1322L1128 1328L1122 1355L1090 1390L1088 1348L1068 1380L1067 1415L1048 1440L1045 1475L1032 1508L1020 1512L1013 1495L988 1505L985 1553L957 1538L955 1558L932 1548L928 1560L902 1543L900 1558L848 1520L845 1478L857 1460L830 1473L835 1415L862 1362L858 1345L840 1315L843 1255L826 1222L828 1185L835 1170L832 1155L820 1140L800 1128L782 1142L777 1115L765 1098L745 1097V1055L735 1030L728 1015L780 950L770 700Z" />
        <path fill={DARK} d="M571 160L612 90L660 140L658 157L680 160L697 147L712 132L745 150L750 147L785 178L790 170L842 207L960 135L992 132L1003 124L1017 150L1013 200L1015 235L1023 255L1017 290L1025 310L1005 325L985 345H975L957 410L942 398L933 440L940 465L935 515L925 545L900 540L880 550V580L877 600L865 605L868 622L878 630L862 645L850 665L837 682L808 675L810 690L787 710L778 735L780 755L788 762L805 750V790L797 800L800 825L797 850L812 855L808 870L820 870L825 885L838 885L851 912L843 938L825 935L808 953L802 945L800 975L795 985L730 1013L680 918L572 813L542 833L532 820L500 715L500 600L560 400L568 268L582 190Z" />
        <g fill="none" stroke="#fff">
          <path d="M745 150L690 225L662 270" strokeWidth="1.800" />
          <path d="M662 270L648 320L615 470" strokeWidth="3.500" />
          <path d="M615 470L598 545L565 690L545 770" strokeWidth="1.800" />
          <path d="M540 790L533 815" strokeWidth="5" />
          <path d="M735 400L717 480L700 482M756 524L744 552M735 705L727 750M886 264L858 270L836 290M958 182L945 194M356 1031L408 1046M342 962L345 978M677 475V490M750 365L755 355M745 560L736 585" strokeWidth="1.300" opacity=".85" />
        </g>
        <path fill="#fff" d="M565 665L587 668L586 682L566 675Z" />
      </g>
      <g transform="translate(1440 1100) scale(.33333)">
        <path fill={YELLOW} d="M153 125L190 117L250 107L290 104L320 108L322 95L345 90V125L345 155L372 140L390 125L385 105L402 92L412 98L430 90L445 97L465 130L470 100L485 78L510 68L535 80L538 83L565 60L590 65L672 130L667 160L760 188L818 185L805 245L753 262L788 300L775 340L728 490L715 455L710 443L668 452L655 490L593 665L603 688L568 720L623 785L620 812L605 812L568 795L555 818L535 808L485 760L467 790L390 790L368 766L340 782L308 800V850L285 835L280 820L252 815L250 803H200L203 690L215 635L205 612L180 608L172 590L163 540L170 528L150 515V485L130 460L95 458L55 467L50 450L38 448L40 435L95 427L92 400L85 375L110 360L118 310L107 300L105 225L85 207L95 203L147 212L153 190L148 175Z" />
        <path fill={SAND} d="M120 365L180 370L235 380L290 350L380 350L480 360L470 440L430 440L410 505L438 540L370 620L375 650L340 705L280 660L270 640L250 590L215 630L208 530L160 480L125 430ZM60 452L100 442V457L55 467Z" />
        <path fill={YELLOW} d="M385 445L478 436L470 480L440 540L405 510L350 480Z" />
        <path fill={RED} d="M374 228L455 240L520 275L520 295L420 345L410 350L290 350L330 280L374 270Z" />
        <path fill={ORANGE} d="M190 440L260 400L360 470L300 545L230 540L180 480Z" />
        {blocks.map(([x, y, w, h, r, c], i) => (
          <rect key={i} x={x} y={y} width={w} height={h} fill={c} transform={`rotate(${r} ${x + w / 2} ${y + h / 2})`} />
        ))}
        <path fill={YELLOW} d="M480 370L590 333L640 320L640 430L480 432Z" />
        <path fill="#fff" d="M258 722L265 722L266 788H292L294 742L300 728L312 722L300 742L337 780L292 795H255ZM660 665L672 662L705 662L703 680L680 672Z" />
        <g fill="none" stroke="#fff" strokeWidth="3.500">
          <path d="M505 230L590 332M380 442L300 525L238 602M296 525L372 645M600 422L640 448L663 452M263 722L262 668L272 645" />
        </g>
        <path fill="none" stroke="#f0c9a0" strokeWidth="3" d="M372 645L480 758L605 812M384 440L520 427M590 332L628 316M410 410L590 332" />
      </g>
    </svg>
  );
}

function StatusIcons() {
  return (
    <svg className="ml-[7px] shrink-0" width="200" height="42" viewBox="764 1765 200 42" fill="none">
      <rect x="765.500" y="1766.500" width="39" height="39" fill="#9dcdee" stroke="#0b62a0" strokeWidth="3" />
      <path d="M770 1771 H791 V1789 M780 1771 V1791 M770 1781 H791 M770 1771 V1791 H784" stroke="#7d8c96" strokeWidth="2.500" />
      <path d="M791 1785 V1801 M783 1793 H799" stroke="#d8effc" strokeWidth="6" />
      <path d="M791 1786 V1800 M784 1793 H798" stroke="#4a5d69" strokeWidth="2.200" />
      <path d="M812.500 1773 H837 V1797.500 H812.500 Z M818.700 1773 V1797 M825 1773 V1797 M831 1773 V1797 M812.500 1779 H837 M812.500 1785 H837 M812.500 1791 H837" stroke="#a0a0a0" strokeWidth="2" />
      <path d="M852 1799 L866 1780 L880 1799 Z" fill="#cfe6f6" />
      <path d="M852 1799 L866 1778 M852 1799 H880" stroke="#6bb3e0" strokeWidth="2.500" />
      <path d="M850 1776 H856 V1781 H850 Z M861 1784 H867 V1790 H861 Z M872 1789 H879 V1794 H872 Z M858 1773 L864 1779 M864 1773 L858 1779 M871 1773 V1781 M867 1777 H876" stroke="#6a6a6a" strokeWidth="2" />
      <path d="M849 1797 H854 V1802 H849 Z" fill="#4f9a55" />
      <path d="M890 1770 H904 V1784 H890 Z" fill="#d8ecd4" />
      <path d="M905 1771 V1802 M889 1786 H922" stroke="#6a6a6a" strokeWidth="2" strokeDasharray="7 2" />
      <path d="M930 1793 V1779 L939 1792 V1778" stroke="#56a5d9" strokeWidth="3.500" />
      <path d="M944 1771 V1801 L960 1783" stroke="#6a6a6a" strokeWidth="2" />
      <path d="M949 1772 C957 1773 959 1779 955 1786 M950 1781 L955 1787 L961 1783" stroke="#56a5d9" strokeWidth="2.500" />
    </svg>
  );
}

function MapView() {
  return (
    <section className="ml-[11px] flex h-[1686px] w-[1946px] shrink-0 flex-col">
      <div className="flex h-[44px] items-center">
        <div className="flex h-[46px] w-[216px] shrink-0 items-center rounded-t-[6px] bg-[#007ad0] pt-[4px]">
          <svg className="ml-[12px] shrink-0" width="32" height="32" viewBox="0 0 32 32">
            <rect x="1" y="1" width="30" height="30" fill="#fff" stroke="#6a6a6a" strokeWidth="2" />
            <path d="M4 4 H28 V28 H4 Z" fill="#cfe6f6" />
            <path d="M4 4 H23 V10 L19 13 L21 18 L15 20 L11 18 L8 21 L9 28 H4 Z M26 20 H28 V28 H22 Z" fill="#9cc3a0" />
          </svg>
          <span className="ml-[10px] w-[129px] pt-[1px] text-[22.500px] tracking-[-0.2px] text-white">LandIndex</span>
          <Cross size={19} color="#bfe0f5" w={2.600} />
        </div>
        <Chevron size={16} className="ml-[1704px] mt-[2px]" color="#6a6a6a" />
      </div>
      <div className="h-[4px] shrink-0 bg-[#007ad0]" />
      <div className="flex h-[1638px] flex-col border-2 border-[#d2d3d8] bg-white">
        <div className="h-[1586px] w-[1942px] overflow-hidden">
          <MapDrawing />
        </div>
        <div className="flex h-[48px] items-center bg-[#f7f9f9] whitespace-nowrap text-[#4c4c4c]">
          <div className="ml-[10px] flex h-[44px] w-[202px] shrink-0 items-center border-2 border-[#929292] bg-white">
            <span className="ml-[11px] w-[166px] pt-[2px] text-[23px] tracking-[-0.5px] text-[#1c1c1c]">1:105,347</span>
            <Caret />
          </div>
          <Separator className="ml-[7px]" />
          <StatusIcons />
          <Chevron size={17} className="ml-[9px]" color="#1c1c1c" w={3.500} />
          <Separator className="ml-[16px]" />
          <span className="ml-[338px] w-[316px] pt-[4px] text-[23px] tracking-[-0.15px]">74.0675950°W 5.1485661°N</span>
          <Chevron size={18} w={4.500} />
          <Separator className="ml-[338px]" />
          <div className="ml-[8px] flex h-[40px] w-[265px] shrink-0 items-center bg-[#fbfcfc]">
            <svg className="ml-[6px] shrink-0" width="34" height="34" viewBox="0 0 34 34" fill="none" stroke="#a8a8a8" strokeWidth="2">
              <path d="M13 10 V2 H31 V22 H20 M17 6 L24 11 L29 5 M24 11 V18" />
              <circle cx="10" cy="18" r="8" fill="#e6f3fb" stroke="#9fc9e6" strokeWidth="2.500" />
              <path d="M10 14 V22 M6 18 H14" stroke="#8ab" />
              <path d="M16 24 L24 32" stroke="#e0c09a" strokeWidth="4" />
            </svg>
            <span className="ml-[6px] pt-[2px] text-[23px] tracking-[-0.05px] text-[#9c9c9c]">Selected Features: 0</span>
          </div>
          <Separator className="ml-[9px]" />
          <svg className="ml-[17px] shrink-0" width="26" height="26" viewBox="0 0 26 26" fill="none" stroke="#b0b0b0" strokeWidth="2.200">
            <path d="M2 2 H24 V24 H2 Z M6 7 L12 13 L20 7 M12 13 L11 20 L15 21 M12 13 L18 17" />
          </svg>
          <Separator className="ml-[16px]" />
          <div className="ml-[17px] flex gap-[6px]">
            <div className="h-[28px] w-[8px] bg-[#6a6a6a]" />
            <div className="h-[28px] w-[8px] bg-[#6a6a6a]" />
          </div>
          <Separator className="ml-[18px]" />
          <svg className="ml-[11px] shrink-0" width="34" height="34" viewBox="0 0 34 34" fill="none" stroke="#56a8dd" strokeWidth="4.500">
            <path d="M4 14 C6 6 12 3 18 3 C23 3 27 6 30 11 M30 20 C28 28 22 31 16 31 C11 31 7 28 4 23" />
            <path d="M32 2 V14 H20 Z M2 32 V20 H14 Z" fill="#56a8dd" stroke="none" />
          </svg>
        </div>
      </div>
    </section>
  );
}

/* ---------- symbology pane ---------- */

function SymbologyTabs() {
  return (
    <svg className="ml-[18px] shrink-0" width="322" height="54" viewBox="2513 195 322 54" fill="none">
      <path d="M2531 205 C2543 209 2550 202 2563 205 L2569 241 C2556 238 2545 246 2536 242 C2531 240 2528 242 2525 241 Z" fill="#e6d253" />
      <path d="M2532 240 L2562 220" stroke="#fff6c8" strokeWidth="9" />
      <path d="M2538 237 L2561 221" stroke="#6a6a6a" strokeWidth="5" />
      <path d="M2528 248 C2529 243 2531 238 2536 238 C2540 240 2537 248 2528 248 Z" fill="#a97a46" />
      <path d="M2588 202 H2620 V234 H2588 Z" fill="#fff" stroke="#5b9a60" strokeWidth="2" />
      <path d="M2591 205 H2617 V231 H2591 Z" fill="#82c280" />
      <path d="M2613 216 L2633 227 L2621 247 L2602 234 Z" fill="#d4ecd0" fillOpacity=".8" stroke="#5b9a60" strokeWidth="2" />
      <path d="M2614 220 L2617 222 V231 H2606 Z" fill="#9ed39b" />
      <path d="M2661 203 V247 M2668 203 V247 M2653 214 H2697 M2653 221 H2697 M2653 234 H2661 M2653 241 H2661 M2684 203 V214 M2690 203 V214 M2684 221 C2684 229 2681 234 2676 234 H2668 M2690 221 C2690 234 2684 241 2676 241 H2668" stroke="#6a6a6a" strokeWidth="2" />
      <path d="M2653 218 H2697" stroke="#badaee" strokeWidth="7" />
      <path d="M2719 207 H2758 L2743 221 V222 H2734 L2719 207 Z" fill="#a8a8a8" />
      <path d="M2719 203.500 H2758 V208 L2743.500 221 L2741 247 H2736 L2733.500 221 L2719 208 Z M2719 207.500 H2758" stroke="#6a6a6a" strokeWidth="2" />
      <path d="M2813 204 L2794 219" stroke="#6a6a6a" strokeWidth="4" />
      <path d="M2781 230 C2783 226 2784 221 2789 221 C2793 224 2790 230 2781 230 Z" fill="#a97a46" />
      <path d="M2798 222 L2806 228 H2826 V246 H2798 Z" fill="#fff" stroke="#6a6a6a" strokeWidth="2" />
      <path d="M2808 234 H2821 M2808 240 H2821" stroke="#6a6a6a" strokeWidth="2" />
      <path d="M2803 232 H2807 V236 H2803 Z M2803 239 H2807 V243 H2803 Z" fill="#7f6bb0" />
    </svg>
  );
}

function Combo({ children, className = "" }: P) {
  return (
    <div className={"flex shrink-0 items-center justify-between border-2 border-[#929292] pr-[9px] text-[23px] tracking-[-0.25px] " + className}>
      <div className="pt-[2px]">{children}</div>
      <Caret className="-mt-1" />
    </div>
  );
}

function Field({ label, children, className = "" }: P & { label: string }) {
  return (
    <div className={"flex items-center " + className}>
      <span className="ml-[12px] w-[180px] shrink-0 pt-[2px] text-[23px] tracking-[-0.1px]">{label}</span>
      {children}
    </div>
  );
}

function Gear() {
  return (
    <svg className="ml-[14px] shrink-0" width="32" height="32" viewBox="0 0 32 32">
      <g fill="none" stroke="#6a6a6a" strokeWidth="6">
        <path d="M16 0 V32 M0 16 H32 M4.700 4.700 L27.300 27.300 M27.300 4.700 L4.700 27.300" />
      </g>
      <circle cx="16" cy="16" r="11" fill="#6a6a6a" />
      <path d="M16 2.200 V30 M2.200 16 H30 M6.500 6.500 L25.500 25.500 M25.500 6.500 L6.500 25.500" stroke="#c9c9c9" strokeWidth="2.500" />
      <circle cx="16" cy="16" r="9" fill="#c9c9c9" />
      <circle cx="16" cy="16" r="5" fill="#f7f9f9" stroke="#6a6a6a" strokeWidth="2" />
    </svg>
  );
}

const classRows = [
  { c: YELLOW, v: "0.000547", l: "0.000272 - 0..." },
  { c: SAND, v: "0.001914", l: "0.000548 - 0..." },
  { c: ORANGE, v: "0.003924", l: "0.001915 - 0..." },
  { c: RED, v: "0.012236", l: "0.003925 - 0..." },
  { c: DARK, v: "0.368252", l: "0.012237 - 0..." },
];

function ClassTable() {
  const head = "flex h-full items-center border-r-2 border-[#c9c9c9]";
  return (
    <div className="ml-[14px] flex h-[893px] w-[508px] flex-col overflow-hidden border-2 border-[#c9c9c9] whitespace-nowrap">
      <div className="flex h-[44px] shrink-0 border-b-2 border-[#c9c9c9] bg-[#dedede] text-[22px] tracking-[-0.4px]">
        <div className={head + " w-[160px] pt-[2px] pl-[12px]"}>Symbol</div>
        <div className={head + " w-[200px] pl-[12px]"}>
          <span className="w-[162px] pt-[2px]">Upper value</span>
          <svg width="14" height="7" viewBox="0 0 14 7" className="-mt-1">
            <path d="M0 7 L7 0 L14 7 Z" fill="#6a6a6a" />
          </svg>
        </div>
        <div className="flex items-center pt-[2px] pl-[12px]">Label</div>
      </div>
      {classRows.map((r, i) => (
        <div key={r.v} className={"flex h-[54px] shrink-0 border-b-2 border-[#c9c9c9] text-[21.5px] tracking-[-0.3px] " + (i % 2 ? "bg-[#eaeaea]" : "bg-white")}>
          <div className={head + " w-[160px]"}>
            <svg className="ml-[40px] shrink-0" width="40" height="32">
              <rect width="40" height="32" rx="1" fill={r.c} />
            </svg>
            <Caret className="ml-[56px]" />
          </div>
          <div className={head + " w-[200px] pt-[3px]"}>
            <span className="ml-[17px] w-[31px]">≤</span>
            <span>{r.v}</span>
          </div>
          <div className="flex w-[142px] items-center pt-[3px] pl-[6px] tracking-[-0.1px]">{r.l}</div>
        </div>
      ))}
      <div className="grow" />
      <div className="flex h-[34px] shrink-0 items-center bg-[#eaeaea]">
        <Chevron dir="left" size={15} className="ml-[10px]" color="#6a6a6a" />
        <div className="ml-[9px] h-[18px] w-[424px] rounded-full bg-[#b4b4b4]" />
        <Chevron dir="right" size={15} className="ml-[21px]" color="#6a6a6a" />
      </div>
    </div>
  );
}

function Symbology() {
  const tab = "flex items-center justify-center border-2 border-[#bfc0c5] rounded-t-[6px] pt-[2px] text-[22.5px] tracking-[-0.25px] text-[#1c1c1c] border-b-0 shrink-0";
  const dock = "flex h-[42px] items-center pl-[12px] pt-[2px] shrink-0 text-[23px] tracking-[-0.1px]";
  return (
    <section className="ml-[12px] flex h-[1686px] w-[567px] shrink-0 flex-col text-[#4c4c4c]">
      <div className="flex h-[1647px] w-[567px] shrink-0 flex-col rounded-t-[6px] border-2 border-[#d2d3d8] bg-[#f7f9f9]">
        <div className="flex h-[66px] shrink-0 items-center">
          <h1 className="ml-[12px] w-[447px] text-[30.5px] tracking-[0.1px] whitespace-nowrap text-[#141414]">Symbology - Vereda_Terren...</h1>
          <Chevron size={17} className="-mt-1" />
          <Pin className="mt-[-4px] ml-[19px]" />
          <Cross className="mt-[-4px] ml-[19px]" size={20} />
        </div>
        <div className="flex h-[54px] items-center">
          <SymbologyTabs />
          <div className="mt-[22px] ml-[177px] flex w-[29px] flex-col gap-[4px]">
            <div className="h-[6px] rounded-[2px] bg-[#6a6a6a]" />
            <div className="h-[6px] rounded-[2px] bg-[#6a6a6a]" />
            <div className="h-[6px] rounded-[2px] bg-[#6a6a6a]" />
          </div>
        </div>
        <div className="ml-[20px] flex h-[19px] w-[320px] shrink-0 items-end border-b-2 border-[#cacaca]">
          <div className="-mb-[2px] h-[6px] w-[64px] bg-[#007ac2]" />
        </div>
        <h2 className="ml-[12px] flex h-[65px] shrink-0 items-end pb-[6px] text-[26.5px] font-semibold tracking-[0.1px]">Primary symbology</h2>
        <Combo className="ml-[12px] h-[44px] w-[540px] bg-white pl-[5px]">Graduated Colors</Combo>
        <Field label="Field" className="mt-[12px]">
          <Combo className="h-[44px] w-[298px] bg-white pl-[5px] text-[#1c1c1c]">IndOcup</Combo>
          <svg className="ml-[14px] shrink-0" width="32" height="32" viewBox="0 0 32 32" fill="none">
            <rect x="1" y="1" width="30" height="30" fill="#fff" stroke="#6a6a6a" strokeWidth="2" />
            <path d="M7 9 C9 5 11 7 12 9 L21 22 C23 25 25 23 26 20 M23 7 L10 24" stroke="#5b9a60" strokeWidth="2.200" />
          </svg>
        </Field>
        <Field label="Normalization" className="mt-[15px]">
          <Combo className="h-[44px] w-[298px] bg-white pl-[5px] text-[#1c1c1c]">{"<None>"}</Combo>
        </Field>
        <Field label="Method" className="mt-[12px]">
          <Combo className="h-[44px] w-[298px] bg-white pl-[5px]">Quantile</Combo>
        </Field>
        <Field label="Classes" className="mt-[10px]">
          <Combo className="h-[44px] w-[298px] bg-white pl-[11px] text-[#1c1c1c]">5</Combo>
        </Field>
        <Field label="Color scheme" className="mt-[10px]">
          <Combo className="h-[48px] w-[298px] pl-[6px]">
            <div className="-mt-[2px] flex h-[32px] w-[254px]">
              <div className="w-[60px] bg-[#ffffb2]" />
              <div className="w-[59px] bg-[#fecc5c]" />
              <div className="w-[60px] bg-[#fd8d3c]" />
              <div className="w-[59px] bg-[#f03b20]" />
              <div className="w-[16px] bg-[#bd0026]" />
            </div>
          </Combo>
          <Gear />
        </Field>
        <div className="mt-[23px] ml-[12px] flex h-[18px] w-[540px] shrink-0 items-center justify-center gap-[4px] border-y-4 border-[#cacaca] pl-[10px]">
          <div className="size-[8px] rounded-full bg-[#c6c6c6]" />
          <div className="size-[8px] rounded-full bg-[#c6c6c6]" />
          <div className="size-[8px] rounded-full bg-[#c6c6c6]" />
        </div>
        <div className="relative z-10 mt-[20px] ml-[12px] flex h-[46px] shrink-0 items-end">
          <div className={tab + " h-[46px] w-[112px] bg-[#eeeff1]"}>Classes</div>
          <div className="flex h-[42px] border-b-2 border-[#bfc0c5]">
            <div className={tab + " -ml-[2px] h-[40px] w-[137px] bg-[#e3e4e6]"}>Histogram</div>
            <div className={tab + " h-[40px] w-[94px] bg-[#e3e4e6]"}>Scales</div>
          </div>
        </div>
        <div className="-mt-[2px] ml-[12px] flex h-[975px] w-[540px] shrink-0 flex-col border-2 border-[#bfc0c5] bg-[#eeeff1]">
          <div className="flex h-[70px] shrink-0 items-center pt-[4px] text-[#1c1c1c]">
            <svg className="ml-[346px] shrink-0" width="30" height="26" viewBox="0 0 30 26" fill="none" stroke="#bdbdbd" strokeWidth="2">
              <path d="M1 1 H29 V25 H1 Z M1 7 H29 M1 13 H29 M1 19 H29" />
            </svg>
            <svg className="mt-[12px] ml-[15px] shrink-0" width="12" height="14" viewBox="0 0 12 14" fill="none" stroke="#a8a8a8" strokeWidth="2">
              <path d="M1 2 H11 M1.500 7 L6 12 L10.500 7" />
            </svg>
            <span className="ml-[23px] w-[72px] pt-[1px] text-[23px] tracking-[-0.1px]">More</span>
            <Chevron size={17} color="#1c1c1c" />
          </div>
          <ClassTable />
        </div>
      </div>
      <div className="-mt-[2px] flex h-[41px]">
        <div className={dock + " w-[98px]"}>Cata...</div>
        <div className={dock + " w-[93px]"}>Geo...</div>
        <div className="flex h-[41px] w-[95px] shrink-0 items-center rounded-b-[6px] border-2 border-t-0 border-[#d2d3d8] bg-[#f7f9f9] pt-[2px] pl-[10px] text-[23px] tracking-[-0.3px] text-[#007ad0]">Sym...</div>
        <div className={dock + " w-[94px]"}>Mod...</div>
        <div className={dock + " w-[94px]"}>Labe...</div>
        <div className={dock + " w-[90px]"}>Char...</div>
      </div>
    </section>
  );
}

export default function App() {
  return (
    <div className="flex h-[1838px] w-[3072px] flex-col overflow-hidden bg-[#eaeaea] font-['Open_Sans','Noto_Sans',sans-serif]">
      <header className="h-[115px] shrink-0 border-b-2 border-[#bfc0c5] bg-[#f7f9f9]">
        <TitleBar />
        <Menu />
      </header>
      <main className="flex h-[1698px] shrink-0 pt-[12px]">
        <Contents />
        <MapView />
        <Symbology />
      </main>
      <div className="mt-[12px] h-[13px] border-t-2 border-[#bdbdbd] bg-[#eeeeee]" />
    </div>
  );
}
